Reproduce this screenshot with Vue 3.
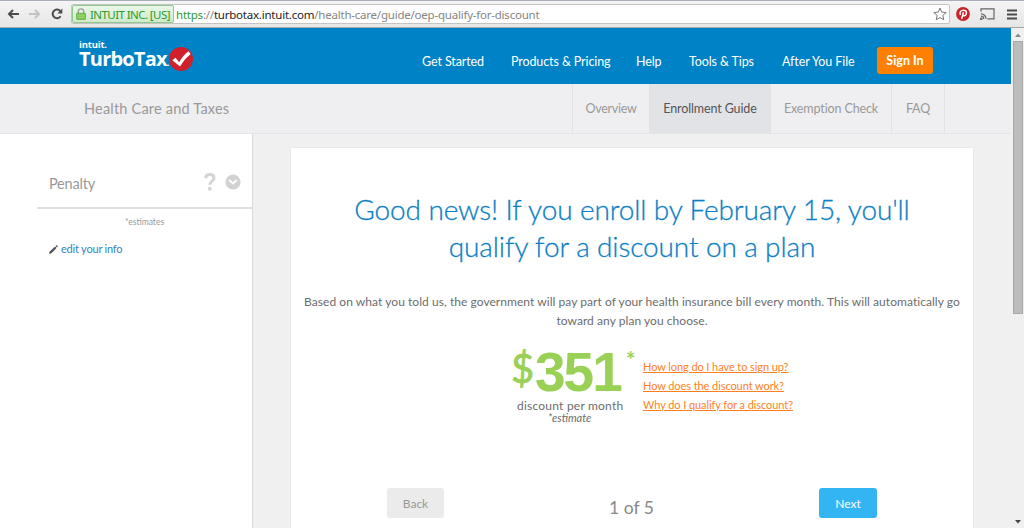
<script setup>
import { ref } from 'vue';

const navLinks = ['Get Started', 'Products & Pricing', 'Help', 'Tools & Tips', 'After You File'];

const tabs = [
	{ id: 'overview', label: 'Overview' },
	{ id: 'enrollment', label: 'Enrollment Guide' },
	{ id: 'exemption', label: 'Exemption Check' },
	{ id: 'faq', label: 'FAQ' }
];

const questions = [
	'How long do I have to sign up?',
	'How does the discount work?',
	'Why do I qualify for a discount?'
];

const activeTab = ref('enrollment');

const selectTab = (id) => {
	activeTab.value = id;
}
</script>

<template>
	<div class="window">
		<div class="toolbar">
			<svg class="arrow" viewBox="0 0 12 10"><path d="M6 1L2 5l4 4M2 5h10" /></svg>
			<svg class="arrow disabled" viewBox="0 0 12 10"><path d="M6 1l4 4-4 4M10 5H0" /></svg>
			<svg class="reload" viewBox="0 0 12 12">
				<path d="M9.6 8.2A4.3 4.3 0 1 1 9.3 3.2" />
				<path class="solid" d="M11.3 0.6v5H6.4z" />
			</svg>
			<div class="address">
				<div class="cert">
					<svg class="lock" viewBox="0 0 10 12">
						<path class="shackle" d="M2.3 6V3.6a2.7 2.7 0 0 1 5.4 0V6" />
						<rect x="0.5" y="5.2" width="9" height="6.3" rx="0.8" />
						<path class="shine" d="M1.5 7.2h7M1.5 9.2h7" />
					</svg>
					<span>INTUIT INC. [US]</span>
				</div>
				<div class="url"><span class="secure">https</span>://<span class="host">turbotax.intuit.com</span>/health-care/guide/oep-qualify-for-discount</div>
				<svg class="star" viewBox="0 0 14 14"><path d="M7 1l1.7 4.1 4.5.4-3.4 2.9 1 4.4L7 10.5l-3.8 2.3 1-4.4L.8 5.5l4.5-.4z" /></svg>
			</div>
			<svg class="pin" viewBox="0 0 14 14">
				<circle cx="7" cy="7" r="6.9" />
				<path d="M4.5 7.8C3.2 5.8 4.4 3.2 7.3 3.2c2.2 0 3.4 1.3 3.1 3.2-.3 2.3-2.6 3.2-3.5 1.6M7.4 5.3L5.6 12" />
			</svg>
			<svg class="cast" viewBox="0 0 15 12">
				<path d="M1 3.8V.9h13v10H7.4M1 5.8a5 5 0 0 1 5 5M1 8.2a2.7 2.7 0 0 1 2.7 2.7" />
				<circle cx="1.2" cy="10.8" r="0.8" />
			</svg>
			<svg class="menu" viewBox="0 0 10 11"><path d="M0 1.5h10M0 5.5h10M0 9.5h10" /></svg>
		</div>

		<div class="viewport">
			<div class="page">
				<header class="header">
					<div class="logo">
						<div class="words">
							<div class="intuit">intuit.</div>
							<div class="turbotax">TurboTax<small>.</small></div>
						</div>
						<svg class="check" viewBox="0 0 24 24">
							<circle cx="12" cy="12" r="12" />
							<path d="M3.3 13.3l3.2-2.5 3.6 4.5c2.8-4.7 5.6-8 9.5-11l2 2.9c-4.2 3.1-7.3 7-10.5 12.3z" />
						</svg>
					</div>
					<nav class="nav">
						<a v-for="link in navLinks" :key="link">{{ link }}</a>
					</nav>
					<button class="sign-in">Sign In</button>
				</header>

				<div class="subnav">
					<div class="section-title">Health Care and Taxes</div>
					<div class="tabs">
						<div v-for="tab in tabs" :key="tab.id" class="tab" :class="[tab.id, { active: tab.id == activeTab }]" @click="selectTab(tab.id)">
							<span>{{ tab.label }}</span>
						</div>
					</div>
				</div>

				<div class="main">
					<aside class="sidebar">
						<div class="penalty">
							<span class="penalty-label">Penalty</span>
							<svg class="help" viewBox="0 0 12 18">
								<path d="M1.7 5.2C1.8 2.9 3.5 1.6 5.9 1.6c2.5 0 4.1 1.4 4.1 3.4 0 3-4.2 3.3-4.2 6.7" />
								<circle cx="5.8" cy="15.7" r="2" />
							</svg>
							<svg class="chevron" viewBox="0 0 16 16"><circle cx="8" cy="8" r="7.6" /><path d="M4.2 6l3.8 3.5L11.8 6" /></svg>
						</div>
						<div class="estimates">*estimates</div>
						<div class="edit">
							<svg class="pencil" viewBox="0 0 10 10"><path d="M0 10l.8-2.7L6.7 1.6l1.7 1.7L2.7 9.2zM7.3 1l.7-.6q.4-.3.8 0l.8.8q.3.4 0 .8l-.6.7z" /></svg>
							<a>edit your info</a>
						</div>
					</aside>

					<section class="card">
						<h1>Good news! If you enroll by February 15, you'll<br>qualify for a discount on a plan</h1>
						<p>Based on what you told us, the government will pay part of your health insurance bill every month. This will automatically go<br>toward any plan you choose.</p>
						<div class="discount">
							<div class="amount">
								<div class="price"><span class="dollar">$</span><b>351</b><span class="star-mark">*</span></div>
								<div class="per-month">discount per month</div>
								<div class="note">*estimate</div>
							</div>
							<div class="questions">
								<a v-for="question in questions" :key="question">{{ question }}</a>
							</div>
						</div>
						<div class="pager">
							<button class="back">Back</button>
							<span class="count">1 of 5</span>
							<button class="next">Next</button>
						</div>
					</section>
				</div>
			</div>
			<div class="scrollbar">
				<svg viewBox="0 0 8 4"><path d="M1 4l3-3.4L7 4z" /></svg>
				<div class="thumb"></div>
				<svg class="down" viewBox="0 0 8 4"><path d="M1 0h6L4 3.5z" /></svg>
			</div>
		</div>
	</div>
</template>

<style>
body {
	margin: 0;
	overflow: hidden;
}
</style>

<style scoped>
.window {
	width: 1024px;
	height: 528px;
	overflow: hidden;
	display: flex;
	flex-direction: column;
	font-family: Lato, "Liberation Sans", sans-serif;
	color: #6c6c6c;
}

svg {
	display: block;
	flex: none;
	fill: none;
}

button {
	border: 0;
	padding: 0;
	font-family: inherit;
	border-radius: 3px;
}

.toolbar {
	box-sizing: border-box;
	height: 28px;
	flex: none;
	display: flex;
	align-items: center;
	padding-left: 7px;
	background: linear-gradient(#f4f4f4, #e6e6e6);
	border-top: 1px solid #a9afb9;
	border-bottom: 1px solid #a8a5a3;
}

.arrow {
	width: 12px;
	height: 10px;
	margin-right: 10px;
	stroke: #4b4b4b;
	stroke-width: 2;
}

.arrow.disabled {
	stroke: #c3c3c3;
}

.reload {
	width: 12px;
	height: 12px;
	stroke: #4b4b4b;
	stroke-width: 2;
}

.reload .solid {
	fill: #4b4b4b;
	stroke: none;
}

.address {
	box-sizing: border-box;
	width: 879px;
	height: 20px;
	margin-left: 8px;
	display: flex;
	align-items: center;
	background: #fff;
	border: 1px solid #c4c4c4;
	border-radius: 2px;
	font-family: "Noto Sans", sans-serif;
	font-size: 11.5px;
}

.cert {
	box-sizing: border-box;
	width: 102px;
	height: 18px;
	display: flex;
	align-items: center;
	padding-left: 3px;
	gap: 4px;
	border: 1px solid #8fc78f;
	border-radius: 2px;
	background: linear-gradient(#eaf7e8, #cfebcb);
	color: #2c9a2c;
	white-space: nowrap;
	font-size: 11.5px;
	letter-spacing: -0.57px;
}

.lock {
	width: 10px;
	height: 12px;
}

.lock rect {
	fill: #7cc553;
	stroke: #5f9f43;
	stroke-width: 0.7;
}

.lock .shackle {
	stroke: #a0a0a0;
	stroke-width: 1.4;
}

.lock .shine {
	stroke: #a7df82;
	stroke-width: 0.8;
}

.url {
	flex: 1;
	padding-left: 2px;
	color: #858585;
	white-space: nowrap;
	letter-spacing: -0.22px;
}

.url .secure {
	color: #2c9a2c;
}

.url .host {
	color: #222;
}

.star {
	width: 14px;
	height: 14px;
	margin-right: 2px;
	stroke: #777;
	stroke-width: 1;
}

.pin {
	width: 14px;
	height: 14px;
	margin-left: 6px;
}

.pin circle {
	fill: #cb2027;
}

.pin path {
	stroke: #fff;
	stroke-width: 1.5;
}

.cast {
	width: 15px;
	height: 12px;
	margin-left: 10px;
	stroke: #666;
	stroke-width: 1.2;
}

.menu {
	width: 10px;
	height: 11px;
	margin-left: 12px;
	stroke: #4b4b4b;
	stroke-width: 2;
}

.viewport {
	flex: 1;
	display: flex;
	min-height: 0;
}

.page {
	width: 1011px;
	display: flex;
	flex-direction: column;
	background: #f0f0f0;
}

.header {
	box-sizing: border-box;
	height: 56px;
	flex: none;
	display: flex;
	padding-left: 79px;
	background: #0082c6;
	color: #fff;
}

.logo {
	width: 343px;
	display: flex;
}

.words {
	width: 90px;
	padding-top: 11px;
	font-family: "Open Sans", sans-serif;
	white-space: nowrap;
}

.intuit {
	font-size: 9.5px;
	font-weight: 700;
	line-height: 11px;
	letter-spacing: -0.2px;
}

.turbotax {
	font-size: 20px;
	font-weight: 700;
	line-height: 18px;
	letter-spacing: -0.8px;
}

.turbotax small {
	font-size: 9px;
}

.check {
	width: 24px;
	height: 24px;
	margin-top: 19px;
}

.check circle {
	fill: #cf202b;
}

.check path {
	fill: #fff;
}

.nav {
	display: grid;
	grid-template-columns: 89px 125px 53px 93px 95px;
	width: 455px;
	padding-top: 25px;
	font-size: 12.5px;
	line-height: 18px;
	letter-spacing: -0.1px;
	white-space: nowrap;
}

.sign-in {
	width: 56px;
	height: 27px;
	margin-top: 19px;
	background: #ff8000;
	color: #fff;
	font-size: 12.5px;
	font-weight: 700;
}

.subnav {
	box-sizing: border-box;
	height: 50px;
	flex: none;
	display: flex;
	background: #efeff1;
	border-bottom: 1px solid #e4e4e6;
}

.section-title {
	width: 488px;
	padding: 15px 0 0 84px;
	font-size: 14.5px;
	line-height: 19px;
	letter-spacing: 0.2px;
	color: #999;
}

.tabs {
	display: flex;
	font-size: 12.5px;
	letter-spacing: -0.12px;
	color: #999;
	border-left: 1px solid #e2e2e5;
}

.tab {
	box-sizing: border-box;
	border-right: 1px solid #e2e2e5;
	text-align: center;
	line-height: 49px;
	white-space: nowrap;
}

.tab.overview {
	width: 77px;
	letter-spacing: -0.3px;
}

.tab.enrollment {
	width: 121px;
}

.tab.exemption {
	width: 121px;
}

.tab.faq {
	width: 53px;
}

.tab.active {
	background: #e2e3e7;
	color: #555;
}

.main {
	flex: 1;
	display: flex;
	min-height: 0;
}

.sidebar {
	box-sizing: border-box;
	width: 253px;
	padding-left: 37px;
	background: #fff;
	border-right: 1px solid #d9d9d9;
}

.penalty {
	box-sizing: border-box;
	height: 75px;
	display: flex;
	align-items: center;
	padding: 23px 11px 0 12px;
	border-bottom: 2px solid #dfdfdf;
}

.penalty-label {
	flex: 1;
	padding-top: 2px;
	font-size: 14.5px;
	letter-spacing: -0.2px;
	color: #999;
}

.help {
	width: 12px;
	height: 18px;
	margin-right: 9px;
	stroke: #d4d4d4;
	stroke-width: 3;
}

.help circle {
	fill: #d4d4d4;
	stroke: none;
}

.chevron {
	width: 16px;
	height: 16px;
}

.chevron circle {
	fill: #d2d2d2;
}

.chevron path {
	stroke: #fff;
	stroke-width: 1.7;
}

.estimates {
	padding-top: 7px;
	font-size: 8.5px;
	line-height: 12px;
	text-align: center;
	color: #999;
}

.edit {
	display: flex;
	align-items: center;
	gap: 2px;
	padding: 12px 0 0 12px;
	font-size: 11px;
	line-height: 18px;
	letter-spacing: -0.2px;
	color: #3285c5;
}

.pencil {
	width: 9px;
	height: 9px;
	margin-right: 1px;
	fill: #555;
}

.card {
	box-sizing: border-box;
	width: 682px;
	margin: 14px 0 0 38px;
	padding-top: 43px;
	background: #fff;
	box-shadow: 0 0 2px #ddd;
	text-align: center;
}

h1 {
	margin: 0;
	font-size: 28px;
	font-weight: 300;
	line-height: 37px;
	letter-spacing: -0.12px;
	color: #0d7fc4;
	-webkit-text-stroke: 0.3px #0d7fc4;
	white-space: nowrap;
}

p {
	margin: 27px 0 0;
	font-size: 12px;
	line-height: 19px;
	letter-spacing: 0.055px;
	white-space: nowrap;
}

.discount {
	display: flex;
	height: 104px;
	padding-left: 219px;
	margin-top: 14px;
}

.amount {
	width: 133px;
	text-align: left;
}

.price {
	height: 55px;
	display: flex;
	align-items: flex-start;
	color: #99d156;
}

.dollar {
	width: 24px;
	padding-left: 1px;
	font-size: 40px;
	line-height: 48px;
	-webkit-text-stroke: 0.8px #99d156;
}

.price b {
	width: 91px;
	font-family: "Liberation Sans", sans-serif;
	font-size: 55px;
	line-height: 57px;
	letter-spacing: -2px;
}

.star-mark {
	font-size: 22px;
	font-weight: 700;
	line-height: 32px;
}

.per-month {
	padding-left: 7px;
	font-size: 12px;
	line-height: 13px;
	letter-spacing: 0.22px;
	white-space: nowrap;
}

.note {
	padding-left: 38px;
	font-size: 11px;
	line-height: 12px;
	font-style: italic;
}

.questions {
	display: flex;
	flex-direction: column;
	padding-top: 13px;
	font-size: 11px;
	line-height: 19px;
	letter-spacing: -0.08px;
	text-align: left;
	color: #ff7f1f;
	text-decoration: underline;
}

.pager {
	display: flex;
	padding: 40px 0 0 96px;
}

.back,
.next {
	width: 57px;
	height: 30px;
	font-size: 12px;
}

.back {
	background: #ebebeb;
	color: #999;
}

.next {
	width: 58px;
	background: #33b5f4;
	color: #fff;
}

.count {
	width: 375px;
	font-size: 17.5px;
	line-height: 39px;
	color: #888;
}

.scrollbar {
	width: 13px;
	display: flex;
	flex-direction: column;
	align-items: center;
	background: #f0f0f0;
}

.scrollbar svg {
	width: 8px;
	height: 4px;
	margin: 5px 0 4px;
	fill: #888;
}

.thumb {
	box-sizing: border-box;
	width: 10px;
	height: 273px;
	background: #bcbcbc;
	border: 1px solid #a8a8a8;
}

.scrollbar .down {
	margin-top: auto;
	fill: #444;
}
</style>
